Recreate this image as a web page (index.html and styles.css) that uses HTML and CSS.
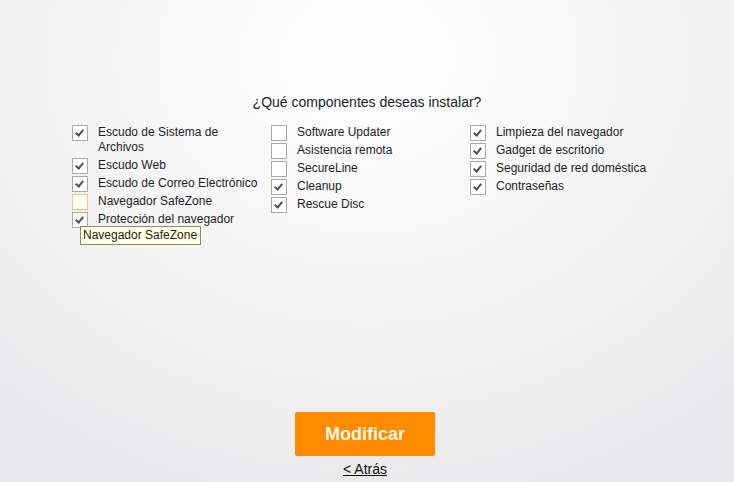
FILE: index.html
```html
<!DOCTYPE html>
<html lang="es">
<head>
  <meta charset="UTF-8" />
  <title>Componentes</title>
  <link rel="stylesheet" href="styles.css">
</head>
<body>
  <div class="page">
    <h1 class="title">¿Qué componentes deseas instalar?</h1>

    <div class="options">
      <ul class="col">
        <li class="opt"><span class="box on"></span><span class="label">Escudo de Sistema de Archivos</span></li>
        <li class="opt"><span class="box on"></span><span class="label">Escudo Web</span></li>
        <li class="opt"><span class="box on"></span><span class="label">Escudo de Correo Electrónico</span></li>
        <li class="opt"><span class="box hover"></span><span class="label">Navegador SafeZone</span></li>
        <li class="opt tip-anchor"><span class="box on"></span><span class="label">Protección del navegador</span>
          <span class="tooltip">Navegador SafeZone</span>
        </li>
      </ul>
      <ul class="col">
        <li class="opt"><span class="box"></span><span class="label">Software Updater</span></li>
        <li class="opt"><span class="box"></span><span class="label">Asistencia remota</span></li>
        <li class="opt"><span class="box"></span><span class="label">SecureLine</span></li>
        <li class="opt"><span class="box on"></span><span class="label">Cleanup</span></li>
        <li class="opt"><span class="box on"></span><span class="label">Rescue Disc</span></li>
      </ul>
      <ul class="col">
        <li class="opt"><span class="box on"></span><span class="label">Limpieza del navegador</span></li>
        <li class="opt"><span class="box on"></span><span class="label">Gadget de escritorio</span></li>
        <li class="opt"><span class="box on"></span><span class="label">Seguridad de red doméstica</span></li>
        <li class="opt"><span class="box on"></span><span class="label">Contraseñas</span></li>
      </ul>
    </div>

    <div class="actions">
      <button class="btn">Modificar</button>
      <a class="back" href="#">&lt; Atrás</a>
    </div>
  </div>
</body>
</html>
```

FILE: styles.css
```css
html, body {
  margin: 0;
  height: 100%;
}
body {
  font-family: 'Liberation Sans', Arial, sans-serif;
  color: #1a1a1a;
  background: radial-gradient(ellipse 75% 95% at 50% 12%, #ffffff 0%, #f6f6f6 45%, #e9e9eb 100%);
  background-color: #e8e8ea;
}
.page {
  height: 482px;
  display: flex;
  flex-direction: column;
  align-items: center;
  box-sizing: border-box;
  padding-top: 94px;
}
.title {
  margin: 0;
  font-size: 14px;
  font-weight: normal;
  line-height: 16px;
  color: #1e1e1e;
}
.options {
  display: grid;
  grid-template-columns: 199px 199px 199px;
  margin-top: 15px;
  margin-left: 5px;
}
.col {
  list-style: none;
  margin: 0;
  padding: 0;
}
.opt {
  display: flex;
  align-items: flex-start;
  font-size: 12px;
  line-height: 15px;
  margin-bottom: 3px;
  color: #1e1e1e;
}
.label {
  width: 168px;
}
.box {
  flex: none;
  position: relative;
  width: 14px;
  height: 14px;
  border: 1px solid #a9a9a9;
  background: #fff;
  margin: 0 10px -1px 1px;
}
.box.on::after {
  content: "";
  position: absolute;
  left: 4px;
  top: 2px;
  width: 3px;
  height: 6px;
  border: solid #4f4f4f;
  border-width: 0 2.5px 2.5px 0;
  transform: rotate(40deg);
}
.box.hover {
  border-color: #f1c383;
  background: #fffdf6;
}
.tip-anchor {
  position: relative;
}
.tooltip {
  position: absolute;
  left: 9px;
  top: 14px;
  padding: 1px 3px 1px 2px;
  background: #ffffe1;
  border: 1px solid #8a8a7a;
  font-size: 12px;
  line-height: 15px;
  white-space: nowrap;
}
.actions {
  margin-top: auto;
  margin-right: 4px;
  padding-bottom: 5px;
  display: flex;
  flex-direction: column;
  align-items: center;
}
.btn {
  width: 140px;
  height: 44px;
  border: none;
  border-radius: 2px;
  background: #fe8b00;
  color: #fff7e6;
  font-family: 'Liberation Sans', Arial, sans-serif;
  font-weight: bold;
  font-size: 18px;
  cursor: pointer;
}
.back {
  margin-top: 5px;
  font-size: 14px;
  line-height: 16px;
  color: #111;
  text-decoration: underline;
}
```
